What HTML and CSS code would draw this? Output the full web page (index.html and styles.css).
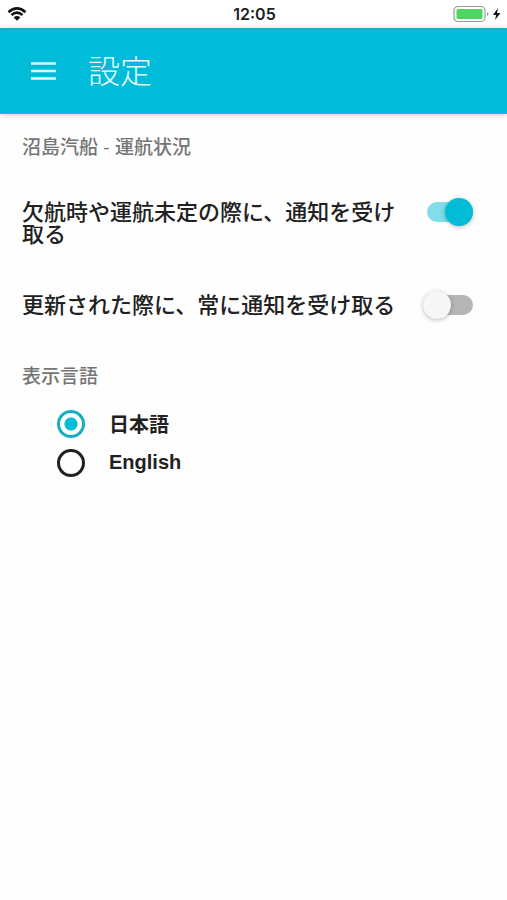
FILE: index.html
```html
<!DOCTYPE html>
<html lang="ja">
<head>
<meta charset="utf-8">
<meta name="viewport" content="width=device-width, initial-scale=1">
<title>設定</title>
<link rel="stylesheet" href="styles.css">
</head>
<body>
<div class="status-bar">
  <svg class="wifi" width="20" height="14" viewBox="0 0 20 14" aria-hidden="true">
    <path d="M1.5 5.2Q10-2.400 18.500 5.200M4.500 8Q10 3.200 15.500 8" fill="none" stroke="#111" stroke-width="2.600"/>
    <path d="M6.600 10.400Q10 7.800 13.400 10.400L10 13.800Z" fill="#111"/>
  </svg>
  <time class="clock">12:05</time>
  <svg class="battery" width="49" height="18" viewBox="0 0 49 18" aria-hidden="true">
    <rect x="1" y="1.500" width="31" height="15" rx="4" fill="#fff" stroke="#999" stroke-width="1.200"/>
    <rect x="3.500" y="4" width="26" height="10" rx="1.500" fill="#4cd562"/>
    <path d="M34 7Q37 9 34 11Z" fill="#999"/>
    <path d="M45 3L40 10H43.200L42 15L47.500 8H44Z" fill="#111"/>
  </svg>
</div>
<header class="toolbar">
  <button class="menu" type="button" aria-label="メニュー">
    <svg width="25" height="18" viewBox="0 0 25 18" aria-hidden="true">
      <path d="M0 1.500H25M0 9H25M0 16.500H25" stroke="#d8fbff" stroke-width="2.600"/>
    </svg>
  </button>
  <h1>設定</h1>
</header>
<main>
  <section>
    <h2>沼島汽船 - 運航状況</h2>
    <label class="setting">
      <span>欠航時や運航未定の際に、通知を受け取る</span>
      <input class="switch" type="checkbox" role="switch" checked>
    </label>
    <label class="setting">
      <span>更新された際に、常に通知を受け取る</span>
      <input class="switch" type="checkbox" role="switch">
    </label>
  </section>
  <section class="language">
    <h2>表示言語</h2>
    <label class="option"><input type="radio" name="language" checked><span>日本語</span></label>
    <label class="option"><input type="radio" name="language"><span>English</span></label>
  </section>
</main>
</body>
</html>
```
FILE: styles.css
```css
* {
  box-sizing: border-box;
}

body {
  margin: 0;
  background: #fefefe;
  color: #212121;
  font-family: "Liberation Sans", "Noto Sans CJK JP", sans-serif;
}

.status-bar {
  display: grid;
  grid-template-columns: 1fr auto 1fr;
  align-items: center;
  height: 28px;
  padding: 0 5px 0 7px;
  background: #fff;
}

.clock {
  font: 600 16px/20px Inter, sans-serif;
}

.battery {
  justify-self: end;
}

.toolbar {
  display: flex;
  align-items: center;
  gap: 32px;
  height: 86px;
  padding: 0 31px 2px;
  background: #00bcd9;
  border-top: 1px solid #1aaec3;
  box-shadow: 0 1px 6px rgba(0, 0, 0, 0.2);
}

.menu {
  display: flex;
  padding: 0;
  border: 0;
  background: none;
}

h1 {
  margin: 0;
  padding-bottom: 4px;
  color: #e4fcff;
  font: 300 32px/40px "Noto Sans CJK JP", sans-serif;
}

main {
  padding: 22px 34px 20px 22px;
}

h2 {
  margin: 0;
  color: #757575;
  font-size: 19px;
  font-weight: 500;
  line-height: 24px;
}

.setting {
  display: flex;
  justify-content: space-between;
  align-items: flex-start;
  gap: 20px;
  margin-top: 42px;
  font-size: 22px;
  font-weight: 500;
  line-height: 22px;
}

.setting + .setting {
  margin-top: 49px;
}

.switch {
  appearance: none;
  position: relative;
  flex: none;
  width: 50px;
  height: 20px;
  margin: 0;
}

.switch::before {
  content: "";
  position: absolute;
  inset: 0 0 0 4px;
  border-radius: 10px;
  background: #b5b5b5;
}

.switch::after {
  content: "";
  position: absolute;
  top: -4px;
  left: 0;
  width: 28px;
  height: 28px;
  border-radius: 50%;
  background: #f6f6f6;
  box-shadow: 0 1px 4px rgba(0, 0, 0, 0.28);
}

.switch:checked::before {
  background: #80deea;
}

.switch:checked::after {
  left: 22px;
  background: #00bcd4;
}

.language {
  margin-top: 48px;
}

.language h2 {
  margin-bottom: 15px;
}

.option {
  display: flex;
  align-items: center;
  gap: 24px;
  height: 39px;
  padding-left: 35px;
  font-size: 20px;
  font-weight: 700;
}

.option input {
  appearance: none;
  width: 28px;
  height: 28px;
  margin: 0;
  border: 3px solid #212121;
  border-radius: 50%;
}

.option input:checked {
  border-color: #16afc2;
  background: radial-gradient(circle, #00bcd4 6px, transparent 7px);
}
```
